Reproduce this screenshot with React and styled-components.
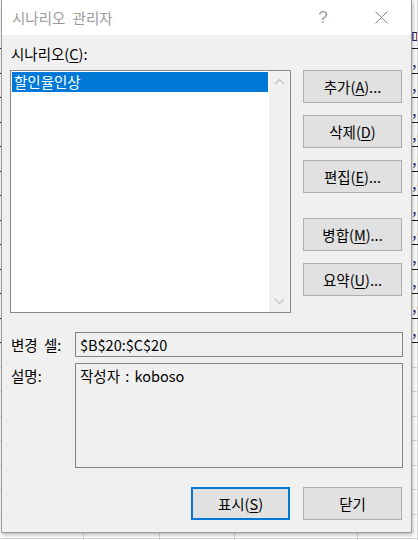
import React from 'react';
import styled, { createGlobalStyle } from 'styled-components';

const Global = createGlobalStyle`
  html, body { margin: 0; padding: 0; background: #fff; }
  body {
    width: 418px; height: 540px; overflow: hidden;
    font-family: "Noto Sans CJK KR", "Noto Sans", sans-serif;
  }
  * { box-sizing: border-box; }
`;

const Stage = styled.div`
  position: relative;
  width: 418px;
  height: 540px;
  overflow: hidden;
  background: #fff;
`;

/* ---------- spreadsheet behind the dialog ---------- */
const Sheet = styled.div`
  display: flex;
  flex-direction: column;
  width: 418px;
`;

const SheetRow = styled.div`
  display: grid;
  grid-template-columns: 84px 76px 75px 123px 60px;
  height: ${p => p.$h}px;
  border-bottom: 1px solid ${p => (p.$strong ? '#1a1a1a' : '#d6d6d6')};
`;

const SheetCell = styled.div`
  border-right: 1px solid #d6d6d6;
  display: flex;
  align-items: ${p => (p.$bottom ? 'flex-end' : 'center')};
  padding-left: ${p => p.$pad || 0}px;
  padding-bottom: ${p => (p.$bottom ? 2 : 0)}px;
  font-size: 15px;
  line-height: 18px;
  color: #1b2460;
  white-space: nowrap;
  overflow: hidden;
`;

/* ---------- dialog ---------- */
const Dialog = styled.div`
  position: absolute;
  left: 1px;
  top: -1px;
  width: 411px;
  height: 534px;
  border: 1px solid #9c9c9c;
  background: #f0f0f0;
  box-shadow: 1px 2px 4px rgba(0, 0, 0, 0.28);
  display: flex;
  flex-direction: column;
`;

const TitleBar = styled.div`
  height: 35px;
  background: #fff;
  display: flex;
  align-items: center;
  padding-left: 10px;
`;

const TitleText = styled.div`
  flex: 1;
  font-size: 14.5px;
  line-height: 20px;
  word-spacing: 4px;
  color: #9a9a9a;
`;

const CaptionButton = styled.div`
  width: ${p => p.$w}px;
  height: 35px;
  display: flex;
  align-items: center;
  justify-content: center;
  color: #a0a0a0;
  font-family: "Liberation Sans", sans-serif;
  font-size: 17px;
  line-height: 20px;
`;

const Body = styled.div`
  display: flex;
  flex-direction: column;
  padding: 9px 8px 12px 8px;
`;

const Label = styled.div`
  font-size: 14.5px;
  line-height: 20px;
  word-spacing: 3px;
  color: #000;
  padding-left: 1px;
  padding-top: ${p => p.$top || 0}px;
  height: ${p => p.$h || 20}px;
  display: flex;
  align-items: ${p => (p.$center ? 'center' : 'flex-start')};
  u { text-underline-offset: 2px; text-decoration-thickness: 1px; }
`;

const MainRow = styled.div`
  display: flex;
  gap: 12px;
  height: 243px;
  margin-top: 6px;
`;

const ListBox = styled.div`
  width: 281px;
  height: 243px;
  border: 1px solid #828790;
  background: #fff;
  display: flex;
`;

const ListItems = styled.div`
  flex: 1;
  padding: 1px;
`;

const ListItem = styled.div`
  height: 20px;
  background: ${p => (p.$selected ? '#0078d7' : 'transparent')};
  color: ${p => (p.$selected ? '#fff' : '#000')};
  font-size: 14.5px;
  line-height: 20px;
  padding-left: 2px;
`;

const ScrollBar = styled.div`
  width: 21px;
  background: #f0f0f0;
  display: flex;
  flex-direction: column;
  justify-content: space-between;
`;

const ScrollArrow = styled.div`
  height: 21px;
  display: flex;
  align-items: center;
  justify-content: center;
`;

const ButtonColumn = styled.div`
  display: flex;
  flex-direction: column;
  gap: 12px;
  width: 99px;
`;

const Button = styled.div`
  width: 99px;
  height: 33px;
  flex-shrink: 0;
  margin-top: ${p => p.$gapTop || 0}px;
  border: ${p => (p.$default ? '2px solid #0078d7' : '1px solid #adadad')};
  background: #e1e1e1;
  display: flex;
  align-items: center;
  justify-content: center;
  font-size: 14.5px;
  line-height: 20px;
  color: #000;
  u { text-underline-offset: 2px; text-decoration-thickness: 1px; }
`;

const FieldRow = styled.div`
  display: grid;
  grid-template-columns: 65px 328px;
  margin-top: ${p => p.$mt}px;
`;

const Field = styled.div`
  height: ${p => p.$h}px;
  border: 1px solid #838383;
  background: #f0f0f0;
  padding: ${p => (p.$multi ? '2px 4px 0 4px' : '0 4px')};
  display: flex;
  align-items: ${p => (p.$multi ? 'flex-start' : 'center')};
  font-size: 14.5px;
  line-height: 20px;
  word-spacing: 2px;
  color: #000;
`;

const Footer = styled.div`
  display: flex;
  justify-content: flex-end;
  gap: 13px;
  margin-top: 19px;
  padding-right: 1px;
`;

const Chevron = ({ up }) => (
  <svg width="11" height="7" viewBox="0 0 11 7">
    <polyline
      points={up ? '1,6 5.5,1.5 10,6' : '1,1 5.5,5.5 10,1'}
      fill="none"
      stroke="#c6c6c6"
      strokeWidth="1.3"
    />
  </svg>
);

const CloseGlyph = () => (
  <svg width="13" height="13" viewBox="0 0 13 13">
    <path d="M0.5 0.5 L12.5 12.5 M12.5 0.5 L0.5 12.5" stroke="#8a8a8a" strokeWidth="1" fill="none" />
  </svg>
);

const sheetVals = ['1,3', '5,6', '2,5', '3,4', '8,0', '1,4', '6,0', '2,4', '9,1', '4,5', '7,4', '1,6'];

export default function App() {
  const emptyRows = Array.from({ length: 9 });
  return (
    <Stage>
      <Global />
      <Sheet>
        <SheetRow $h={49} $strong>
          <SheetCell /><SheetCell /><SheetCell /><SheetCell />
          <SheetCell $pad={53} $bottom>매출</SheetCell>
        </SheetRow>
        {sheetVals.map((v, i) => (
          <SheetRow key={i} $h={24.5} $strong>
            <SheetCell /><SheetCell /><SheetCell /><SheetCell />
            <SheetCell $pad={46}>{v}</SheetCell>
          </SheetRow>
        ))}
        {emptyRows.map((_, i) => (
          <SheetRow key={'e' + i} $h={24.5}>
            <SheetCell /><SheetCell /><SheetCell /><SheetCell /><SheetCell />
          </SheetRow>
        ))}
      </Sheet>

      <Dialog>
        <TitleBar>
          <TitleText>시나리오 관리자</TitleText>
          <CaptionButton $w={58}>?</CaptionButton>
          <CaptionButton $w={59}><CloseGlyph /></CaptionButton>
        </TitleBar>
        <Body>
          <Label>시나리오(<u>C</u>):</Label>
          <MainRow>
            <ListBox>
              <ListItems>
                <ListItem $selected>할인율인상</ListItem>
              </ListItems>
              <ScrollBar>
                <ScrollArrow><Chevron up /></ScrollArrow>
                <ScrollArrow><Chevron /></ScrollArrow>
              </ScrollBar>
            </ListBox>
            <ButtonColumn>
              <Button>추가(<u>A</u>)...</Button>
              <Button>삭제(<u>D</u>)</Button>
              <Button>편집(<u>E</u>)...</Button>
              <Button $gapTop={13}>병합(<u>M</u>)...</Button>
              <Button>요약(<u>U</u>)...</Button>
            </ButtonColumn>
          </MainRow>
          <FieldRow $mt={19}>
            <Label $h={25} $center>변경 셀:</Label>
            <Field $h={25}>$B$20:$C$20</Field>
          </FieldRow>
          <FieldRow $mt={6}>
            <Label $top={3} $h={105}>설명:</Label>
            <Field $h={105} $multi>작성자 : koboso</Field>
          </FieldRow>
          <Footer>
            <Button $default>표시(<u>S</u>)</Button>
            <Button>닫기</Button>
          </Footer>
        </Body>
      </Dialog>
    </Stage>
  );
}
